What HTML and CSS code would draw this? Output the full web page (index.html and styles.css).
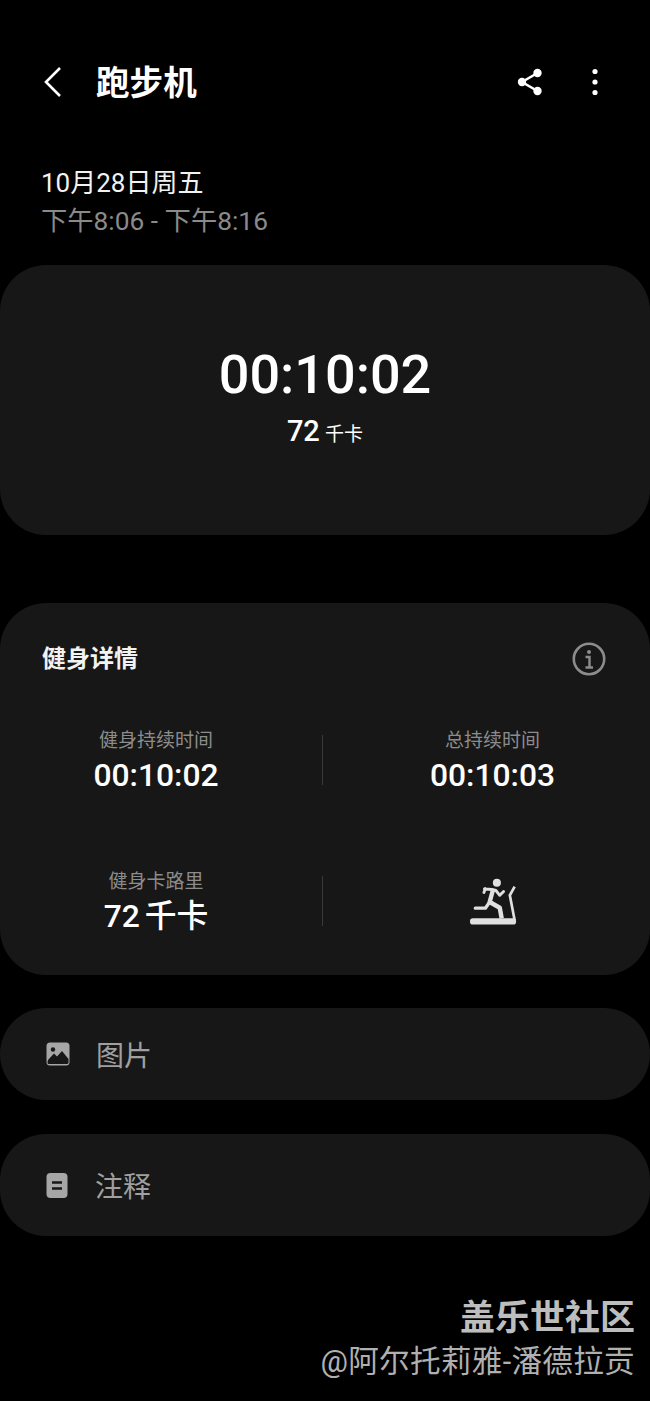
FILE: index.html
```html
<!DOCTYPE html>
<html lang="zh">
<head>
    <meta charset="UTF-8">
    <title>跑步机</title>
    <link rel="stylesheet" href="styles.css">
</head>
<body>
    <div class="page">
        <!-- 顶部栏 -->
        <div class="topbar">
            <svg class="back" width="20" height="32" viewBox="0 0 20 32"><path d="M17 2 L3 16 L17 30" fill="none" stroke="#fff" stroke-width="2.6"/></svg>
            <div class="title">跑步机</div>
            <svg class="share" width="28" height="30" viewBox="0 0 28 30">
                <path d="M21.5 6 L6 15 L21.5 24" fill="none" stroke="#fff" stroke-width="2.6"/>
                <circle cx="21.5" cy="6" r="4.2" fill="#fff"/>
                <circle cx="6" cy="15" r="4.2" fill="#fff"/>
                <circle cx="21.5" cy="24" r="4.2" fill="#fff"/>
            </svg>
            <svg class="more" width="8" height="28" viewBox="0 0 8 28">
                <circle cx="4" cy="3.5" r="2.6" fill="#fff"/>
                <circle cx="4" cy="14" r="2.6" fill="#fff"/>
                <circle cx="4" cy="24.5" r="2.6" fill="#fff"/>
            </svg>
        </div>

        <div class="date">
            <div class="date-day">10月28日周五</div>
            <div class="date-time">下午8:06 - 下午8:16</div>
        </div>

        <div class="card summary">
            <div class="summary-time">00:10:02</div>
            <div class="summary-cal">72 <span class="unit">千卡</span></div>
        </div>

        <div class="card details">
            <div class="details-head">
                <div class="details-title">健身详情</div>
                <svg width="34" height="34" viewBox="0 0 34 34">
                    <circle cx="17" cy="17" r="15.2" fill="none" stroke="#8c8c8c" stroke-width="2.6"/>
                    <circle cx="17" cy="10" r="2" fill="#8c8c8c"/>
                    <path d="M13.5 15 H17.5 V25 M13.5 25.5 H21" fill="none" stroke="#8c8c8c" stroke-width="2.4"/>
                </svg>
            </div>
            <div class="stats">
                <div class="stat">
                    <div class="stat-label">健身持续时间</div>
                    <div class="stat-value">00:10:02</div>
                </div>
                <div class="stat">
                    <div class="stat-label">总持续时间</div>
                    <div class="stat-value">00:10:03</div>
                </div>
                <div class="stat stat-low">
                    <div class="stat-label">健身卡路里</div>
                    <div class="stat-value">72 千卡</div>
                </div>
                <div class="stat">
                    <svg class="treadmill" width="52" height="50" viewBox="0 0 52 50">
                        <circle cx="29" cy="5" r="4.2" fill="#e0e0e0"/>
                        <path d="M17 11 L15.5 15 M16 11.5 L24 12 L28 13 L32 18 L36 14" fill="none" stroke="#e0e0e0" stroke-width="3" stroke-linejoin="round" stroke-linecap="round"/>
                        <path d="M25 12 L21.5 25 L32 31 L34 42" fill="none" stroke="#e0e0e0" stroke-width="4.6" stroke-linejoin="round"/>
                        <path d="M21.5 25 L17 31.5 L6.5 31.5" fill="none" stroke="#e0e0e0" stroke-width="3.4" stroke-linejoin="round" stroke-linecap="round"/>
                        <path d="M47.5 9 L42.5 18 L47.5 44" fill="none" stroke="#e0e0e0" stroke-width="2.8"/>
                        <rect x="1" y="42" width="48" height="6.5" rx="3" fill="#e0e0e0"/>
                    </svg>
                </div>
            </div>
        </div>

        <div class="card row row-pic">
            <svg width="24" height="24" viewBox="0 0 24 24">
                <rect x="0.5" y="0.5" width="23" height="23" rx="3.5" fill="#a6a6a6"/>
                <circle cx="7" cy="7.5" r="2.2" fill="#171717"/>
                <path d="M1.5 20.5 L2 18 L8 11.5 L11 14.5 L16 9 L22.5 17 V20.5 Q22.5 22 21 22 H3 Q1.5 22 1.5 20.5 Z" fill="#171717"/>
            </svg>
            <span class="row-text">图片</span>
        </div>

        <div class="card row row-note">
            <svg width="22" height="25" viewBox="0 0 22 25">
                <rect x="0.5" y="0" width="21" height="25" rx="4" fill="#a6a6a6"/>
                <path d="M6 9.5 H16 M6 15.5 H16" stroke="#171717" stroke-width="2.4"/>
            </svg>
            <span class="row-text">注释</span>
        </div>

        <div class="mark">
            <div class="mark-name">盖乐世社区</div>
            <div class="mark-user">@阿尔托莉雅-潘德拉贡</div>
        </div>
    </div>
</body>
</html>
```

FILE: styles.css
```css
body {
    margin: 0;
    background: #000;
    color: #fff;
    font-family: Roboto, "Noto Sans CJK SC", sans-serif;
}
.page {
    width: 650px;
    height: 1401px;
    overflow: hidden;
}
.topbar {
    display: flex;
    align-items: center;
    height: 64px;
    margin-top: 50px;
    padding: 0 51px 0 43px;
}
.back {
    margin-right: 33px;
}
.title {
    flex: 1;
    margin-bottom: 4px;
    font-size: 33.6px;
    font-weight: 700;
}
.share {
    margin-right: 47px;
}
.date {
    margin-top: 50px;
    padding-left: 41px;
}
.date-day {
    height: 38px;
    line-height: 38px;
    font-size: 26px;
    color: #f2f2f2;
}
.date-time {
    height: 38px;
    line-height: 38px;
    font-size: 26.3px;
    color: #8a8a8a;
}
.card {
    background: #171717;
    border-radius: 46px;
}
.summary {
    height: 270px;
    margin-top: 25px;
    padding-top: 79px;
    box-sizing: border-box;
    text-align: center;
}
.summary-time {
    height: 62px;
    line-height: 62px;
    font-size: 54px;
    font-weight: 500;
}
.summary-cal {
    margin-top: 5px;
    line-height: 40px;
    font-size: 29px;
    font-weight: 500;
    word-spacing: -2px;
}
.unit {
    font-size: 19px;
    font-weight: 400;
}
.details {
    height: 372px;
    margin-top: 68px;
    box-sizing: border-box;
    padding-top: 38px;
}
.details-head {
    display: flex;
    justify-content: space-between;
    align-items: center;
    height: 36px;
    padding: 0 44px 0 42px;
}
.details-title {
    margin-bottom: 6px;
    font-size: 24px;
    font-weight: 700;
    color: #f2f2f2;
}
.stats {
    display: grid;
    grid-template-columns: 323px 1fr;
    grid-auto-rows: 50px;
    row-gap: 91px;
    margin-top: 58px;
}
.stat {
    display: flex;
    flex-direction: column;
    align-items: center;
    justify-content: center;
}
.stat:nth-child(odd) {
    padding-right: 10px;
    border-right: 1px solid #3a3a3a;
}
.stat:nth-child(even) {
    padding-left: 12px;
}
.stat-label {
    height: 26px;
    margin-top: 1px;
    margin-bottom: 3px;
    line-height: 26px;
    font-size: 19px;
    color: #8c8c8c;
}
.stat-value {
    height: 36px;
    line-height: 36px;
    font-size: 31.8px;
    font-weight: 500;
    word-spacing: -3px;
}
.treadmill {
    margin: 2px 0 0 2px;
}
.row {
    display: flex;
    align-items: center;
    padding-left: 46px;
}
.row-pic {
    height: 92px;
    margin-top: 33px;
}
.row-note {
    height: 102px;
    margin-top: 34px;
}
.row-text {
    margin-left: 26px;
    font-size: 28px;
    color: #a0a0a0;
}
.row-note .row-text {
    margin-left: 27px;
}
.mark {
    margin-top: 60px;
    padding-right: 15px;
    text-align: right;
    color: #bdbdbd;
}
.mark-name {
    height: 46px;
    line-height: 46px;
    font-size: 35px;
    font-weight: 700;
}
.mark-user {
    height: 44px;
    margin-top: -2px;
    line-height: 44px;
    font-size: 30.6px;
    letter-spacing: 0.3px;
    color: #b0b0b0;
}
```
